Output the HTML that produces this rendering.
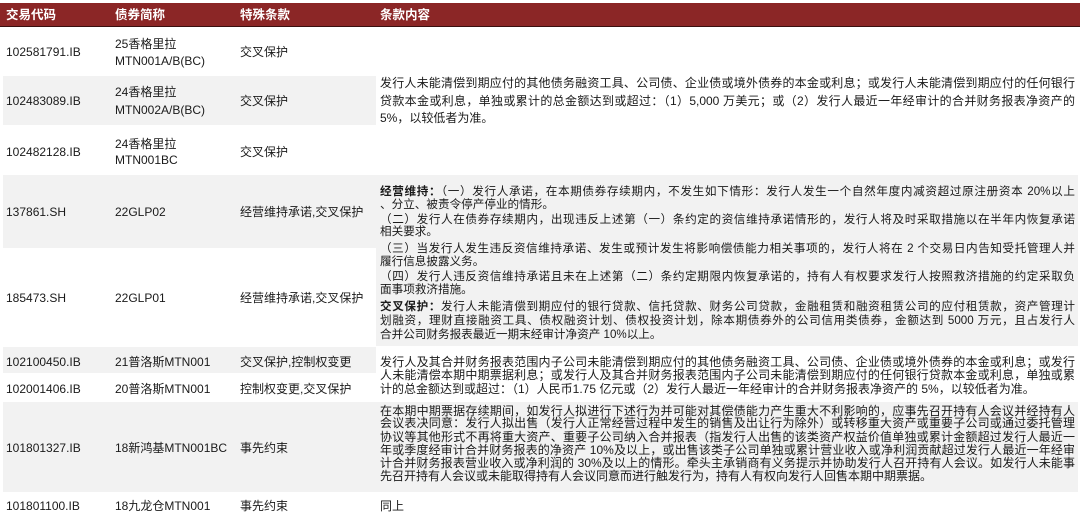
<!DOCTYPE html>
<html><head><meta charset="utf-8"><style>
html,body{margin:0;padding:0;background:#fff;}
body{width:1080px;height:517px;position:relative;overflow:hidden;font-family:"Liberation Sans","Noto Sans CJK SC",sans-serif;color:#1a1a1a;font-size:12px;}
.bg{position:absolute;background:#f2f2f2;}
.t{position:absolute;white-space:nowrap;line-height:14px;height:14px;}
.j{width:695px;text-align:justify;text-align-last:justify;}
.h{position:absolute;left:0;top:3px;width:1080px;height:23px;background:#8b2626;border-bottom:1px solid #3a1010;}
.ht{position:absolute;top:8px;color:#fff;font-weight:bold;font-size:12.5px;line-height:14px;white-space:nowrap;}
.s{font-size:11.6px;}
</style></head><body>
<div class="h"></div>
<div class="ht" style="left:6px">交易代码</div>
<div class="ht" style="left:115px">债券简称</div>
<div class="ht" style="left:240px">特殊条款</div>
<div class="ht" style="left:380px">条款内容</div>

<!-- backgrounds -->
<div class="bg" style="left:3px;top:76px;width:373px;height:49px"></div>
<div class="bg" style="left:3px;top:175px;width:373px;height:73px"></div>
<div class="bg" style="left:376px;top:175px;width:702px;height:171px"></div>
<div class="bg" style="left:3px;top:347px;width:373px;height:26px"></div>
<div class="bg" style="left:3px;top:402px;width:1075px;height:90px"></div>

<!-- row 1 -->
<div class="t" style="left:6px;top:45px">102581791.IB</div>
<div class="t" style="left:115px;top:37px">25香格里拉</div>
<div class="t" style="left:115px;top:54px">MTN001A/B(BC)</div>
<div class="t" style="left:240px;top:45px">交叉保护</div>
<!-- row 2 -->
<div class="t" style="left:6px;top:94px">102483089.IB</div>
<div class="t" style="left:115px;top:85px">24香格里拉</div>
<div class="t" style="left:115px;top:103px">MTN002A/B(BC)</div>
<div class="t" style="left:240px;top:94px">交叉保护</div>
<!-- row 3 -->
<div class="t" style="left:6px;top:145px">102482128.IB</div>
<div class="t" style="left:115px;top:137px">24香格里拉</div>
<div class="t" style="left:115px;top:153px">MTN001BC</div>
<div class="t" style="left:240px;top:145px">交叉保护</div>
<!-- row 4,5 -->
<div class="t" style="left:6px;top:205px">137861.SH</div>
<div class="t" style="left:115px;top:205px">22GLP02</div>
<div class="t" style="left:240px;top:205px">经营维持承诺,交叉保护</div>
<div class="t" style="left:6px;top:291px">185473.SH</div>
<div class="t" style="left:115px;top:291px">22GLP01</div>
<div class="t" style="left:240px;top:291px">经营维持承诺,交叉保护</div>
<!-- row 6,7 -->
<div class="t" style="left:6px;top:355px">102100450.IB</div>
<div class="t" style="left:115px;top:355px">21普洛斯MTN001</div>
<div class="t" style="left:240px;top:355px">交叉保护,控制权变更</div>
<div class="t" style="left:6px;top:382px">102001406.IB</div>
<div class="t" style="left:115px;top:382px">20普洛斯MTN001</div>
<div class="t" style="left:240px;top:382px">控制权变更,交叉保护</div>
<!-- row 8 -->
<div class="t" style="left:6px;top:441px">101801327.IB</div>
<div class="t" style="left:115px;top:441px">18新鸿基MTN001BC</div>
<div class="t" style="left:240px;top:441px">事先约束</div>
<!-- row 9 -->
<div class="t" style="left:6px;top:499px">101801100.IB</div>
<div class="t" style="left:115px;top:499px">18九龙仓MTN001</div>
<div class="t" style="left:240px;top:499px">事先约束</div>

<!-- col4 block A -->
<div class="t j" style="left:380px;top:76px">发行人未能清偿到期应付的其他债务融资工具、公司债、企业债或境外债券的本金或利息；或发行人未能清偿到期应付的任何银行</div>
<div class="t j" style="left:380px;top:94px">贷款本金或利息，单独或累计的总金额达到或超过：（1）5,000 万美元；或（2）发行人最近一年经审计的合并财务报表净资产的</div>
<div class="t" style="left:380px;top:111px">5%，以较低者为准。</div>

<!-- col4 block B -->
<div class="t j s" style="left:380px;top:185px"><b>经营维持：</b>（一）发行人承诺，在本期债券存续期内，不发生如下情形：发行人发生一个自然年度内减资超过原注册资本 20%以上</div>
<div class="t s" style="left:380px;top:198px">、分立、被责令停产停业的情形。</div>
<div class="t j s" style="left:380px;top:213px">（二）发行人在债券存续期内，出现违反上述第（一）条约定的资信维持承诺情形的，发行人将及时采取措施以在半年内恢复承诺</div>
<div class="t s" style="left:380px;top:225px">相关要求。</div>
<div class="t j s" style="left:380px;top:242px">（三）当发行人发生违反资信维持承诺、发生或预计发生将影响偿债能力相关事项的，发行人将在 2 个交易日内告知受托管理人并</div>
<div class="t s" style="left:380px;top:255px">履行信息披露义务。</div>
<div class="t j s" style="left:380px;top:270px">（四）发行人违反资信维持承诺且未在上述第（二）条约定期限内恢复承诺的，持有人有权要求发行人按照救济措施的约定采取负</div>
<div class="t s" style="left:380px;top:283px">面事项救济措施。</div>
<div class="t j s" style="left:380px;top:300px"><b>交叉保护：</b>发行人未能清偿到期应付的银行贷款、信托贷款、财务公司贷款，金融租赁和融资租赁公司的应付租赁款，资产管理计</div>
<div class="t j s" style="left:380px;top:314px">划融资，理财直接融资工具、债权融资计划、债权投资计划，除本期债券外的公司信用类债券，金额达到 5000 万元，且占发行人</div>
<div class="t s" style="left:380px;top:328px">合并公司财务报表最近一期末经审计净资产 10%以上。</div>

<!-- col4 block C -->
<div class="t j" style="left:380px;top:355px">发行人及其合并财务报表范围内子公司未能清偿到期应付的其他债务融资工具、公司债、企业债或境外债券的本金或利息；或发行</div>
<div class="t j" style="left:380px;top:368px">人未能清偿本期中期票据利息；或发行人及其合并财务报表范围内子公司未能清偿到期应付的任何银行贷款本金或利息，单独或累</div>
<div class="t" style="left:380px;top:382px">计的总金额达到或超过：（1）人民币1.75 亿元或（2）发行人最近一年经审计的合并财务报表净资产的 5%，以较低者为准。</div>

<!-- col4 block D -->
<div class="t j" style="left:380px;top:404px">在本期中期票据存续期间，如发行人拟进行下述行为并可能对其偿债能力产生重大不利影响的，应事先召开持有人会议并经持有人</div>
<div class="t j" style="left:380px;top:416px">会议表决同意：发行人拟出售（发行人正常经营过程中发生的销售及出让行为除外）或转移重大资产或重要子公司或通过委托管理</div>
<div class="t j" style="left:380px;top:430px">协议等其他形式不再将重大资产、重要子公司纳入合并报表（指发行人出售的该类资产权益价值单独或累计金额超过发行人最近一</div>
<div class="t j" style="left:380px;top:443px">年或季度经审计合并财务报表的净资产 10%及以上，或出售该类子公司单独或累计营业收入或净利润贡献超过发行人最近一年经审</div>
<div class="t j" style="left:380px;top:456px">计合并财务报表营业收入或净利润的 30%及以上的情形。牵头主承销商有义务提示并协助发行人召开持有人会议。如发行人未能事</div>
<div class="t" style="left:380px;top:469px">先召开持有人会议或未能取得持有人会议同意而进行触发行为，持有人有权向发行人回售本期中期票据。</div>

<div class="t" style="left:380px;top:499px">同上</div>
</body></html>
